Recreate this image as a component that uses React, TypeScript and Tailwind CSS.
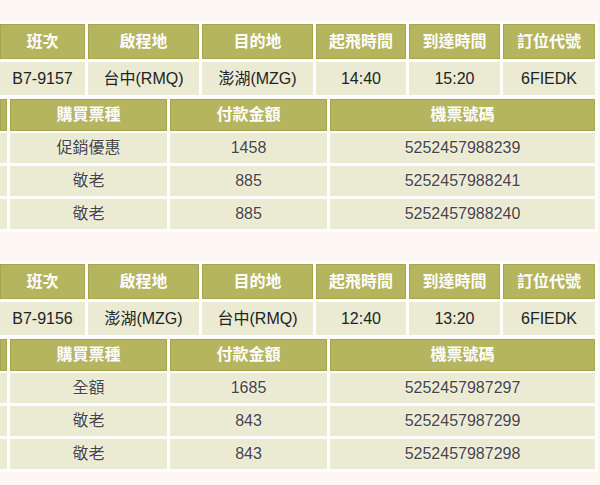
import React from "react";

const F = { fontFamily: '"Liberation Sans", Arial, "Noto Sans CJK TC", sans-serif' };

type Flight = {
  no: string;
  from: string;
  to: string;
  dep: string;
  arr: string;
  code: string;
  tickets: { type: string; amount: string; num: string }[];
};

const flights: Flight[] = [
  {
    no: "B7-9157",
    from: "台中(RMQ)",
    to: "澎湖(MZG)",
    dep: "14:40",
    arr: "15:20",
    code: "6FIEDK",
    tickets: [
      { type: "促銷優惠", amount: "1458", num: "5252457988239" },
      { type: "敬老", amount: "885", num: "5252457988241" },
      { type: "敬老", amount: "885", num: "5252457988240" },
    ],
  },
  {
    no: "B7-9156",
    from: "澎湖(MZG)",
    to: "台中(RMQ)",
    dep: "12:40",
    arr: "13:20",
    code: "6FIEDK",
    tickets: [
      { type: "全額", amount: "1685", num: "5252457987297" },
      { type: "敬老", amount: "843", num: "5252457987299" },
      { type: "敬老", amount: "843", num: "5252457987298" },
    ],
  },
];

const widths = ["w-[85px]", "w-[111px]", "w-[111px]", "w-[90px]", "w-[91px]", "w-[92px]"];
const heads = ["班次", "啟程地", "目的地", "起飛時間", "到達時間", "訂位代號"];

function HeadCell({ w, children }: { w: string; children?: React.ReactNode }) {
  return (
    <div
      className={`${w} shrink-0 h-full flex items-center justify-center bg-[#b5b45f] border border-[#a6a54e] text-white font-bold text-[16px]`}
    >
      {children}
    </div>
  );
}

function Block({ f }: { f: Flight }) {
  const vals = [f.no, f.from, f.to, f.dep, f.arr, f.code];
  return (
    <div className="bg-white w-[598px] pt-[3px] pb-[3px] pr-[3px] flex flex-col">
      <div className="flex gap-[3px] h-[35px]">
        {heads.map((h, i) => (
          <HeadCell key={i} w={widths[i]}>
            {h}
          </HeadCell>
        ))}
      </div>
      <div className="flex gap-[3px] h-[33px] mt-[3px]">
        {vals.map((v, i) => (
          <div
            key={i}
            className={`${widths[i]} shrink-0 h-full flex items-center justify-center bg-[#ebebd4] text-[#222] text-[16px]`}
          >
            {v}
          </div>
        ))}
      </div>
      <div className="flex gap-[3px] h-[32px] mt-[4px]">
        <HeadCell w="w-[7px]" />
        <HeadCell w="w-[157px]">購買票種</HeadCell>
        <HeadCell w="w-[157px]">付款金額</HeadCell>
        <HeadCell w="w-[265px]">機票號碼</HeadCell>
      </div>
      <div className="flex flex-col gap-[3px] mt-[2px]">
        {f.tickets.map((t, i) => (
          <div key={i} className="flex gap-[3px] h-[30px] text-[#444] text-[16px] [text-shadow:0_0_2px_#fff]">
            <div className="w-[7px] shrink-0 bg-[#ebebd4]" />
            <div className="w-[157px] shrink-0 flex items-center justify-center bg-[#ebebd4]">{t.type}</div>
            <div className="w-[157px] shrink-0 flex items-center justify-center bg-[#ebebd4]">{t.amount}</div>
            <div className="w-[265px] shrink-0 flex items-center justify-center bg-[#ebebd4]">{t.num}</div>
          </div>
        ))}
      </div>
    </div>
  );
}

export default function App() {
  return (
    <div className="w-[600px] h-[485px] overflow-hidden bg-[#fdf6f2] pt-[21px] flex flex-col" style={F}>
      <Block f={flights[0]} />
      <div className="mt-[29px]">
        <Block f={flights[1]} />
      </div>
    </div>
  );
}
